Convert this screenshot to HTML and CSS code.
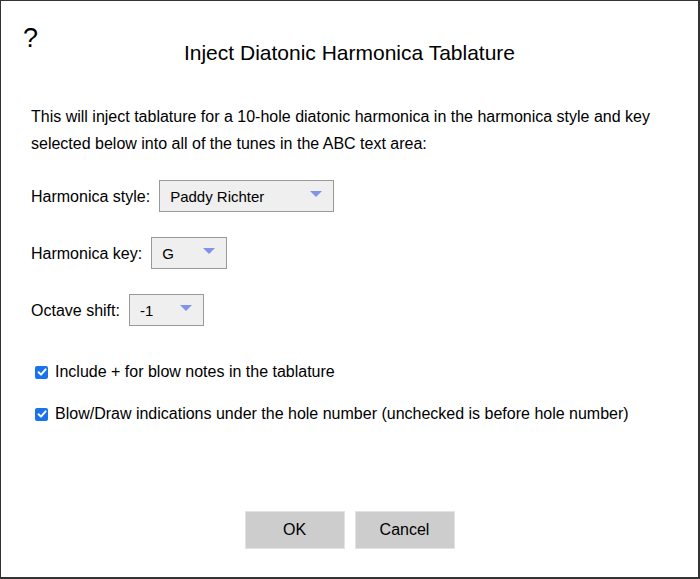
FILE: index.html
```html
<!DOCTYPE html>
<html>
<head>
<meta charset="utf-8">
<link rel="stylesheet" href="styles.css">
</head>
<body>
<div class="dialog">
  <div class="help">?</div>
  <h1 class="title">Inject Diatonic Harmonica Tablature</h1>
  <p class="intro">This will inject tablature for a 10-hole diatonic harmonica in the harmonica style and key selected below into all of the tunes in the ABC text area:</p>
  <div class="field field-style">
    <span class="label">Harmonica style:</span>
    <div class="select select-style"><span>Paddy Richter</span><span class="arrow"></span></div>
  </div>
  <div class="field field-key">
    <span class="label">Harmonica key:</span>
    <div class="select select-key"><span>G</span><span class="arrow"></span></div>
  </div>
  <div class="field field-octave">
    <span class="label">Octave shift:</span>
    <div class="select select-octave"><span>-1</span><span class="arrow"></span></div>
  </div>
  <label class="check check-1"><span class="box"><svg viewBox="0 0 12 12" width="12" height="12"><path d="M2.6 6.2 L5 8.6 L9.6 3.4" fill="none" stroke="#fff" stroke-width="2" stroke-linecap="round" stroke-linejoin="round"/></svg></span>Include + for blow notes in the tablature</label>
  <label class="check check-2"><span class="box"><svg viewBox="0 0 12 12" width="12" height="12"><path d="M2.6 6.2 L5 8.6 L9.6 3.4" fill="none" stroke="#fff" stroke-width="2" stroke-linecap="round" stroke-linejoin="round"/></svg></span>Blow/Draw indications under the hole number (unchecked is before hole number)</label>
  <div class="buttons">
    <div class="btn">OK</div>
    <div class="btn">Cancel</div>
  </div>
</div>
</body>
</html>
```
FILE: styles.css
```css
html, body {
  margin: 0;
  padding: 0;
  background: #fff;
}
body {
  font-family: "Liberation Sans", Arial, sans-serif;
  color: #000;
}
.dialog {
  box-sizing: border-box;
  width: 700px;
  height: 579px;
  border-top: 1px solid #333;
  border-left: 1px solid #333;
  border-right: 2px solid #333;
  border-bottom: 2px solid #333;
  display: flex;
  flex-direction: column;
  padding: 0 0 0 30px;
}
.help {
  font-size: 27px;
  line-height: 30px;
  margin: 22px 0 0 -8px;
  height: 30px;
}
.title {
  font-weight: normal;
  font-size: 21px;
  line-height: 24px;
  margin: -12px 0 0 -30px;
  text-align: center;
}
.intro {
  font-size: 16px;
  line-height: 27px;
  margin: 38px 30px 0 0;
}
.field {
  display: flex;
  align-items: center;
  font-size: 16px;
}
.field-style { margin-top: 23px; }
.field-key { margin-top: 25px; }
.field-octave { margin-top: 25px; }
.label { margin-right: 9px; padding-top: 2px; }
.select {
  box-sizing: border-box;
  height: 32px;
  background: #efefef;
  border: 1px solid #999;
  display: flex;
  align-items: center;
  justify-content: space-between;
  padding: 0 11px 0 10px;
  font-size: 15px;
  position: relative;
}
.select-style { width: 175px; }
.select-key { width: 76px; }
.select-octave { width: 75px; }
.arrow {
  width: 0;
  height: 0;
  border-left: 6px solid transparent;
  border-right: 6px solid transparent;
  border-top: 6px solid #7f93ea;
  align-self: flex-start;
  margin-top: 10px;
}
.check {
  display: flex;
  align-items: center;
  font-size: 16px;
  margin-left: 4px;
}
.check-1 { margin-top: 37px; }
.check-2 { margin-top: 24px; }
.box {
  width: 13px;
  height: 13px;
  border-radius: 2px;
  background: #1a73e8;
  display: flex;
  align-items: center;
  justify-content: center;
  margin-right: 7px;
}
.buttons {
  margin-top: auto;
  margin-bottom: 28px;
  margin-left: -30px;
  display: flex;
  justify-content: center;
  gap: 10px;
}
.btn {
  box-sizing: border-box;
  width: 100px;
  height: 38px;
  background: #cdcdcd;
  border: 1px solid #e3e3e3;
  display: flex;
  align-items: center;
  justify-content: center;
  font-size: 16px;
}
```
